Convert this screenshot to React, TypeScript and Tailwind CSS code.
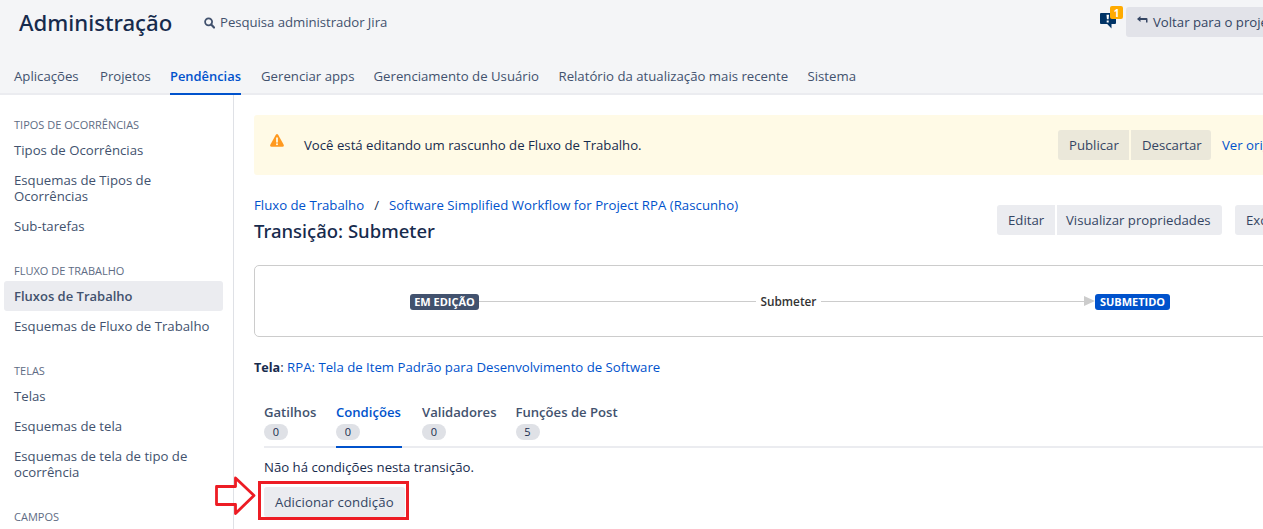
import type { ReactNode } from "react";

const navItems = [
  { label: "Aplicações", width: "w-[66px]" },
  { label: "Projetos", width: "w-[50px]" },
  { label: "Pendências", width: "w-[71px]", active: true },
  { label: "Gerenciar apps", width: "w-[92.5px]" },
  { label: "Gerenciamento de Usuário", width: "w-[165px]" },
  { label: "Relatório da atualização mais recente", width: "w-[229px]" },
  { label: "Sistema", width: "w-[48px]" },
];

const sidebarGroups = [
  {
    title: "Tipos de Ocorrências",
    items: ["Tipos de Ocorrências", "Esquemas de Tipos de Ocorrências", "Sub-tarefas"],
  },
  { title: "Fluxo de Trabalho", items: ["Fluxos de Trabalho", "Esquemas de Fluxo de Trabalho"] },
  { title: "Telas", items: ["Telas", "Esquemas de tela", "Esquemas de tela de tipo de ocorrência"] },
  { title: "Campos", items: [] },
];

const tabs = [
  { label: "Gatilhos", count: 0, width: "w-[52px]" },
  { label: "Condições", count: 0, width: "w-[66px]", active: true },
  { label: "Validadores", count: 0, width: "w-[73.5px]" },
  { label: "Funções de Post", count: 5, width: "w-[103px]" },
];

function Button({ children, className }: { children: ReactNode; className: string }) {
  return (
    <button className={`flex h-[30px] shrink-0 items-center whitespace-nowrap px-[11px] pt-px text-[#344563] ${className}`}>
      {children}
    </button>
  );
}

function Header() {
  return (
    <header className="flex h-[95px] flex-col justify-between border-b-2 border-[#ebecf0] bg-[#f4f5f7]">
      <div className="flex h-[46px] shrink-0 items-center">
        <h1 className="ml-[19px] w-[185px] shrink-0 text-[22.2px] font-medium text-[#172b4d] font-['Noto_Sans',sans-serif]">
          Administração
        </h1>
        <div className="flex w-[896px] shrink-0 items-center gap-[5px] text-[#42526e]">
          <svg width="11" height="12" viewBox="0 0 11 12" fill="none" stroke="currentColor" className="mt-px">
            <circle cx="4.6" cy="4.8" r="3.5" strokeWidth="1.8" />
            <path d="M7.2 7.6l2.8 2.9" strokeWidth="2.2" strokeLinecap="round" />
          </svg>
          <span className="-mt-px tracking-[-0.05px]">Pesquisa administrador Jira</span>
        </div>
        <div className="relative h-[30px] w-[26px] shrink-0">
          <svg width="16" height="18" viewBox="0 0 16 18" className="mt-[4px]">
            <path d="M1 1h14a1 1 0 0 1 1 1v9a1 1 0 0 1-1 1h-3.500v4.500L7.200 12H1a1 1 0 0 1-1-1V2a1 1 0 0 1 1-1z" fill="#003366" />
            <path d="M6.500 2.800h2.500l-.4 4.500H6.900z" fill="#fff" />
            <rect x="6.700" y="8.500" width="2" height="2" fill="#fff" />
          </svg>
          <span className="absolute left-[10px] top-[-2px] flex h-[13px] w-[13px] items-center justify-center rounded-[2px] bg-[#ffab00] text-[10px] leading-none font-bold text-white">
            1
          </span>
        </div>
        <Button className="-mt-[2px] w-[170px] gap-[5px] rounded-[3px] bg-[#e2e3e9]">
          <svg width="11" height="7" viewBox="0 0 11 7" className="mt-[-6px]">
            <path d="M0 3L3.500 0v2H9.500Q10.500 2 10.500 3v3.500H9V4H3.500v2z" fill="#344563" />
          </svg>
          <span>Voltar para o projeto</span>
        </Button>
      </div>
      <nav className="ml-[14px] flex gap-5 text-[#42526e]">
        {navItems.map((n) => (
          <a
            key={n.label}
            className={`-mb-[2px] h-[39px] shrink-0 whitespace-nowrap border-b-2 pt-[10px] leading-5 ${n.width} ${
              n.active
                ? "border-[#0052cc] text-[12.9px] font-semibold text-[#0052cc]"
                : "border-transparent"
            }`}
          >
            {n.label}
          </a>
        ))}
      </nav>
    </header>
  );
}

function Sidebar() {
  return (
    <aside className="w-[234px] shrink-0 border-r border-[#dfe1e6] pl-1 pr-[10px]">
      {sidebarGroups.map((g) => (
        <section key={g.title}>
          <h2 className="h-10 px-[10px] pt-[22px] text-[11px] leading-4 text-[#5e6c84] uppercase">{g.title}</h2>
          {g.items.map((item) => (
            <a
              key={item}
              className={`block rounded-[3px] px-[10px] py-[7px] leading-4 ${
                item === "Fluxos de Trabalho"
                  ? "bg-[#ebecf0] text-[13px] font-semibold text-[#42526e]"
                  : "text-[#42526e]"
              }`}
            >
              {item}
            </a>
          ))}
        </section>
      ))}
    </aside>
  );
}

function DraftBanner() {
  return (
    <div className="flex h-[60px] items-center rounded-l-[3px] bg-[#fffae6]">
      <svg width="14" height="13" viewBox="0 0 14 13" className="mr-5 ml-4 mt-[-10px]">
        <path d="M5.700.9Q7-.7 8.300.9L13.700 10.700Q14.200 12.700 12.500 12.800H1.500Q-.2 12.700.3 10.700z" fill="#ff991f" />
        <path d="M7 4.200v3.600" stroke="#fffae6" strokeWidth="1.800" strokeLinecap="round" />
        <circle cx="7" cy="10.200" r="1" fill="#fffae6" />
      </svg>
      <p className="w-[754px] pt-[2px] text-[#172b4d]">Você está editando um rascunho de Fluxo de Trabalho.</p>
      <div className="flex gap-[2px]">
        <Button className="w-[71px] rounded-l-[3px] bg-[#ebe8da]">Publicar</Button>
        <Button className="w-20 rounded-r-[3px] bg-[#ebe8da]">Descartar</Button>
      </div>
      <a className="ml-[11px] pt-[2px] whitespace-nowrap text-[#0052cc]">Ver original</a>
    </div>
  );
}

function Transition() {
  return (
    <div className="mt-5 flex h-[72px] items-center rounded-[5px] border border-[#ccc]">
      <span className="mt-[2px] ml-[155px] flex h-4 w-[69px] shrink-0 items-center justify-center rounded-[3px] bg-[#42526e] pb-px text-[11px] leading-none font-bold text-white">
        EM EDIÇÃO
      </span>
      <span className="h-px w-[277px] bg-[#ccc]" />
      <span className="mt-[2px] w-[65px] text-center text-[11.8px] font-semibold text-[#333]">Submeter</span>
      <span className="h-px w-[263px] bg-[#ccc]" />
      <svg width="11" height="10" viewBox="0 0 11 10" fill="#ccc">
        <path d="M0 0l11 5L0 10z" />
      </svg>
      <span className="mt-[2px] flex h-4 w-[75px] shrink-0 items-center justify-center rounded-[3px] bg-[#0052cc] pb-px text-[11px] leading-none font-bold text-white">
        SUBMETIDO
      </span>
    </div>
  );
}

function Conditions() {
  return (
    <section className="ml-[10px]">
      <div className="mt-[23px] flex h-[47px] gap-5 border-b-2 border-[#ebecf0]">
        {tabs.map((t) => (
          <div
            key={t.label}
            className={`h-[47px] shrink-0 whitespace-nowrap border-b-2 pt-px ${t.width} ${
              t.active ? "border-[#0052cc] text-[#0052cc]" : "border-transparent text-[#42526e]"
            }`}
          >
            <p className="h-[22px] text-[13.1px] leading-5 font-semibold">{t.label}</p>
            <span className="flex h-4 w-6 items-center justify-center rounded-full bg-[#dfe1e6] pb-px text-[11px] leading-none text-[#172b4d]">
              {t.count}
            </span>
          </div>
        ))}
      </div>
      <p className="mt-[9px] leading-5 text-[#172b4d]">Não há condições nesta transição.</p>
      <div className="relative mt-[10px] w-[141px]">
        <Button className="w-full rounded-[3px] bg-[#ebecf0]">
          <span className="tracking-[0.1px]">Adicionar condição</span>
        </Button>
        <span className="absolute -top-[6px] -left-[6px] h-[39px] w-[151px] border-3 border-[#ed1c24]" />
        <svg
          width="42"
          height="42"
          viewBox="0 0 42 42"
          className="absolute -top-[12px] -left-[50px]"
          fill="none"
          stroke="#ed1c24"
          strokeWidth="2.800"
        >
          <path d="M2.500 11.500H21.500V3L40 20.500 21.500 38.500V29.500H2.500z" strokeLinejoin="round" />
        </svg>
      </div>
    </section>
  );
}

export default function App() {
  return (
    <div className="h-[529px] w-[1263px] overflow-hidden bg-white text-[13.2px] font-['Open_Sans',sans-serif]">
      <Header />
      <div className="flex h-[434px]">
        <Sidebar />
        <main className="w-[1100px] shrink-0 pt-5 pl-5">
          <DraftBanner />
          <div className="mt-5 flex">
            <div className="w-[743px]">
              <p className="flex gap-[10px] leading-5 text-[#172b4d]">
                <a className="text-[#0052cc]">Fluxo de Trabalho</a>
                <span>/</span>
                <a className="tracking-[0.03px] text-[#0052cc]">Software Simplified Workflow for Project RPA (Rascunho)</a>
              </p>
              <h2 className="mt-[2px] text-[18.5px] leading-7 font-medium text-[#172b4d] font-['Noto_Sans',sans-serif]">
                Transição: Submeter
              </h2>
            </div>
            <div className="mt-[10px] flex gap-[2px]">
              <Button className="w-[58px] rounded-l-[3px] bg-[#ebecf0]">Editar</Button>
              <Button className="w-[165px] rounded-r-[3px] bg-[#ebecf0] !px-[9px]">Visualizar propriedades</Button>
            </div>
            <Button className="mt-[10px] ml-[13px] w-[70px] rounded-[3px] bg-[#ebecf0]">Excluir</Button>
          </div>
          <Transition />
          <p className="mt-5 leading-5 text-[#172b4d]">
            <strong className="text-[12.6px] font-bold">Tela</strong>:{" "}
            <a className="text-[#0052cc]">RPA: Tela de Item Padrão para Desenvolvimento de Software</a>
          </p>
          <Conditions />
        </main>
      </div>
    </div>
  );
}
